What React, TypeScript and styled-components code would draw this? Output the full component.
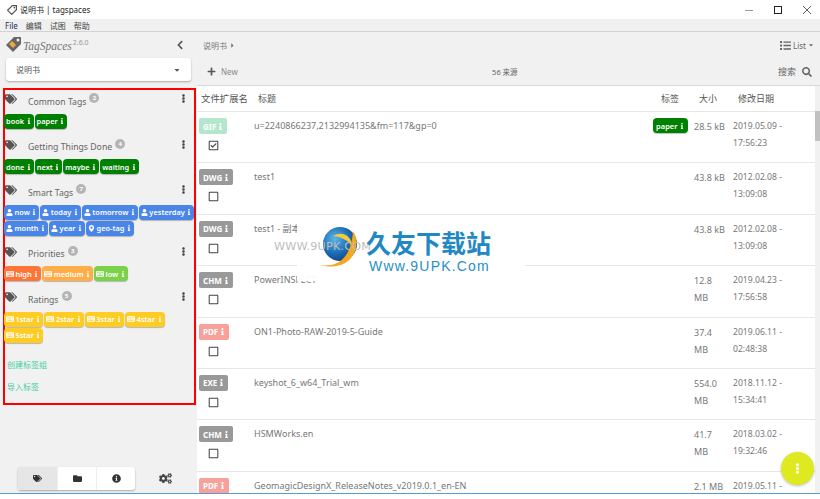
import React from "react"
import styled, { createGlobalStyle } from "styled-components"
import {
  FaTags, FaEllipsisV, FaChevronLeft, FaInfo, FaUser, FaMapMarkerAlt, FaKeyboard,
  FaFolder, FaInfoCircle, FaCogs, FaPlus, FaSearch, FaList, FaCaretDown, FaCaretRight,
  FaRegSquare, FaRegCheckSquare,
} from "react-icons/fa"

const sans = `"Noto Sans", "Noto Sans CJK SC", sans-serif`

const GlobalStyle = createGlobalStyle`
  html, body { margin: 0; padding: 0; background: #fff; }
  body { font-family: ${sans}; overflow: hidden; }
  * { box-sizing: border-box; }
`

const Page = styled.div`
  position: relative;
  width: 820px;
  height: 499px;
  overflow: hidden;
  display: flex;
  flex-direction: column;
  background: #fff;
`

const TitleBar = styled.div`
  height: 19px;
  flex: none;
  display: flex;
  align-items: center;
  padding-left: 7px;
  gap: 3px;
  font-size: 8px;
  color: #222;
  background: #fff;
`

const WindowButtons = styled.div`
  margin-left: auto;
  margin-right: -1px;
  display: flex;
  align-items: center;
`

const WindowButton = styled.div`
  width: 29px;
  height: 19px;
  display: flex;
  align-items: center;
  justify-content: center;
`

const MenuBar = styled.div`
  height: 13px;
  flex: none;
  display: flex;
  align-items: center;
  gap: 8px;
  padding-left: 5px;
  font-size: 8px;
  color: #333;
  background: #f0f0f0;
  border-bottom: 1px solid #d2d2d2;
`

const MenuItem = styled.span<{ $strong?: boolean }>`
  color: ${p => (p.$strong ? "#1b2a55" : "#444")};
`

const Body = styled.div`
  flex: none;
  height: 462px;
  display: flex;
  border-bottom: 1px solid #5b9bd5;
`

const Sidebar = styled.aside`
  width: 197px;
  flex: none;
  display: flex;
  flex-direction: column;
  background: #f1f1f1;
`

const LogoRow = styled.div`
  height: 25px;
  display: flex;
  align-items: center;
  padding: 0 9px 0 5px;
  gap: 1px;
  color: #6f6f6f;
`

const LogoText = styled.span`
  font-family: "Liberation Serif", serif;
  font-style: italic;
  font-size: 11.5px;
  color: #777;
`

const LogoVersion = styled.sup`
  font-size: 7px;
  color: #999;
  margin-left: 1px;
  font-family: ${sans};
  font-style: normal;
`

const CollapseButton = styled.div`
  margin-left: auto;
  margin-right: 3px;
  display: flex;
  color: #555;
  font-size: 10px;
`

const LocationSelect = styled.div`
  margin: 1px 6px 0 6px;
  height: 23px;
  padding: 0 10px;
  display: flex;
  align-items: center;
  justify-content: space-between;
  background: #fff;
  border-radius: 3px;
  box-shadow: 0 1px 2px rgba(0, 0, 0, 0.3);
  font-size: 8px;
  color: #555;
`

const TagPanel = styled.div`
  margin: 7px 1px 0 3px;
  height: 317px;
  flex: none;
  border: 2px solid #f00;
  display: flex;
  flex-direction: column;
`

const GroupHeader = styled.div`
  height: 23.5px;
  display: flex;
  align-items: flex-start;
  padding: 3px 6px 0 0;
  color: #555;
`

const GroupName = styled.span`
  margin: 2.5px 0 0 11px;
  font-size: 8.7px;
  color: #666;
  line-height: 13px;
`

const CountBadge = styled.span`
  margin: 0 0 0 3px;
  width: 10px;
  height: 10px;
  border-radius: 50%;
  background: #b5b5b5;
  color: #fff;
  font-size: 6px;
  font-weight: 700;
  display: flex;
  align-items: center;
  justify-content: center;
`

const GroupMenu = styled.div`
  margin-left: auto;
  color: #444;
  font-size: 9px;
  display: flex;
  padding-top: 1px;
`

const TagList = styled.div`
  display: flex;
  flex-wrap: wrap;
  gap: 1px;
  margin: 0 -2px 7px -1px;
`

const Tag = styled.span<{ $color: string }>`
  height: 15px;
  padding: 0 2px;
  display: inline-flex;
  align-items: center;
  gap: 1.5px;
  border-radius: 4px;
  background: ${p => p.$color};
  color: #fff;
  font-size: 7.4px;
  font-weight: 600;
  white-space: nowrap;
  box-shadow: 0 1px 1px rgba(0, 0, 0, 0.25);
  svg { flex: none; }
`

const SideLink = styled.div`
  font-size: 8px;
  color: #3fcf9f;
  margin: 0 0 0 2px;
  height: 22px;
  line-height: 22px;
`

const SideLinks = styled.div`
  margin-top: 4px;
`

const BottomTabs = styled.div`
  margin-top: auto;
  height: 26px;
  padding: 0 0 3px 18px;
  display: flex;
  align-items: center;
`

const TabGroup = styled.div`
  display: flex;
  height: 23px;
  border-radius: 3px;
  background: #fff;
  box-shadow: 0 1px 2px rgba(0, 0, 0, 0.3);
`

const Tab = styled.div<{ $active?: boolean }>`
  width: 39px;
  display: flex;
  align-items: center;
  justify-content: center;
  font-size: 9px;
  color: #333;
  background: ${p => (p.$active ? "#e6e6e6" : "transparent")};
  border-left: ${p => (p.$active ? "none" : "1px solid #eee")};
`

const SettingsButton = styled.div`
  margin-left: 24px;
  display: flex;
  color: #444;
  font-size: 13px;
`

const Main = styled.main`
  flex: 1;
  min-width: 0;
  display: flex;
  flex-direction: column;
`

const Toolbar = styled.div`
  height: 54px;
  flex: none;
  background: #f1f1f1;
  border-bottom: 1px solid #d8d8d8;
  padding: 0 6px;
  display: flex;
  flex-direction: column;
`

const ToolRow = styled.div`
  height: 26.5px;
  display: flex;
  align-items: center;
  justify-content: space-between;
  font-size: 8px;
  color: #777;
`

const Crumb = styled.span`
  display: flex;
  align-items: center;
  gap: 2px;
`

const ListToggle = styled.span`
  display: flex;
  align-items: center;
  gap: 2px;
  color: #666;
`

const NewButton = styled.span`
  display: flex;
  align-items: center;
  gap: 5px;
  margin-left: 4px;
  font-size: 8px;
  color: #888;
  svg { color: #555; }
`

const FileCount = styled.span`
  font-size: 7.5px;
  color: #666;
  margin-right: 6px;
`

const SearchBox = styled.span`
  display: flex;
  align-items: center;
  gap: 6px;
  font-size: 9px;
  color: #666;
  margin-right: 2px;
`

const TableArea = styled.div`
  position: relative;
  flex: 1;
  min-height: 0;
  overflow: hidden;
  display: flex;
`

const Table = styled.div`
  flex: 1;
  min-width: 0;
  overflow: hidden;
`

const HeaderRow = styled.div`
  display: grid;
  grid-template-columns: 57px 393px 48px 39px 1fr;
  height: 26px;
  align-items: center;
  padding: 0 0 1px 4px;
  border-bottom: 1px solid #e6e6e6;
  font-size: 9px;
  color: #555;
`

const HeaderType = styled.span`
  font-size: 9.4px;
  white-space: nowrap;
`

const HeaderTags = styled.span`
  padding-left: 10px;
`

const FileRow = styled.div`
  display: grid;
  grid-template-columns: 55px 393px 47px 39px 1fr;
  height: 51.4px;
  padding: 6px 0 0 2px;
  border-bottom: 1px solid #e6e6e6;
  font-size: 9px;
  color: #777;
`

const TypeCell = styled.div`
  display: flex;
  flex-direction: column;
  align-items: flex-start;
  gap: 6px;
`

const TypeBadge = styled.span<{ $color: string }>`
  height: 16px;
  padding: 0 3px 0 4px;
  display: inline-flex;
  align-items: center;
  gap: 1px;
  border-radius: 2px;
  background: ${p => p.$color};
  color: #fff;
  font-size: 8px;
  font-weight: 700;
`

const CheckBox = styled.span`
  margin-left: 9px;
  display: flex;
  color: #444;
  font-size: 11px;
`

const FileName = styled.div`
  line-height: 12px;
  padding-top: 2px;
  white-space: nowrap;
`

const TagCell = styled.div`
  display: flex;
  justify-content: flex-end;
  padding-right: 6px;
  align-items: flex-start;
`

const FileTag = styled(Tag)`
  font-size: 7.5px;
  padding: 0 3px;
`

const SizeCell = styled.div`
  line-height: 17px;
  max-width: 34px;
`

const DateCell = styled.div`
  line-height: 17px;
  font-size: 8.6px;
  white-space: nowrap;
`

const ScrollTrack = styled.div`
  width: 5px;
  flex: none;
  background: #f1f1f1;
  padding-top: 25px;
`

const ScrollThumb = styled.div`
  height: 30px;
  background: #c1c1c1;
`

const Fab = styled.div`
  position: absolute;
  right: 6px;
  bottom: 8px;
  width: 33px;
  height: 33px;
  border-radius: 50%;
  background: #dfe91f;
  color: #fff;
  display: flex;
  align-items: center;
  justify-content: center;
  font-size: 11px;
  box-shadow: 0 1px 3px rgba(0, 0, 0, 0.25);
`

const Watermark = styled.div`
  position: absolute;
  left: 297px;
  top: 215px;
  width: 228px;
  height: 66px;
  background: rgba(255, 255, 255, 0.94);
  display: flex;
  align-items: center;
  gap: 5px;
  padding-left: 22px;
`

const WatermarkGhost = styled.div`
  position: absolute;
  left: -23px;
  top: 25px;
  font-size: 11.2px;
  letter-spacing: 0.2px;
  color: #bdbdbd;
  font-family: "DejaVu Sans", sans-serif;
  white-space: nowrap;
`

const WatermarkText = styled.div`
  position: relative;
  display: flex;
  flex-direction: column;
  align-items: flex-start;
  padding-top: 6px;
  line-height: 1;
`

const WatermarkTitle = styled.div`
  font-size: 25px;
  font-weight: 700;
  color: #2288c4;
  font-family: "Noto Sans CJK SC", sans-serif;
  line-height: 26px;
`

const WatermarkUrl = styled.div`
  font-size: 14px;
  letter-spacing: 1.2px;
  color: #2a8fc5;
  font-family: "Liberation Sans", sans-serif;
  margin: 4px 0 0 3px;
`

const GlobeLogo = () => (
  <svg width="42" height="46" viewBox="0 0 42 46" style={{ position: "relative", flex: "none" }}>
    <defs>
      <radialGradient id="globe" cx="35%" cy="35%" r="75%">
        <stop offset="0%" stopColor="#5fb6e8" />
        <stop offset="55%" stopColor="#1b6fb5" />
        <stop offset="100%" stopColor="#123a78" />
      </radialGradient>
    </defs>
    <circle cx="21" cy="19" r="17" fill="url(#globe)" />
    <path d="M14 11 C24 5 34 12 33 23 C32 17 24 12 14 11 Z" fill="#f6c93c" />
    <path d="M1 40 C14 42 32 38 34 6 C44 22 32 48 1 40 Z" fill="#f3a81f" />
  </svg>
)

const TagLogo = () => (
  <svg width="17" height="17" viewBox="0 0 17 17">
    <path d="M9 1 L16 1 L16 8 L8 16 L1 9 Z" fill="#666" />
    <path d="M7 5 L11 9 L8 12 L4 8 Z" fill="#f0a83c" />
    <circle cx="13" cy="4" r="1.5" fill="#f1f1f1" />
  </svg>
)

const AppIcon = () => (
  <svg width="10" height="10" viewBox="0 0 17 17">
    <path d="M9 1 L16 1 L16 8 L8 16 L1 9 Z" fill="none" stroke="#555" strokeWidth="2" />
    <circle cx="12.5" cy="4.5" r="1.4" fill="#555" />
  </svg>
)

type TagDef = { name: string; icon?: "user" | "pin" | "key" }
type GroupDef = { name: string; count: number; color?: string; tags: TagDef[] }

const names = (list: string[], icon?: TagDef["icon"]): TagDef[] => list.map(name => ({ name, icon }))

const groups: GroupDef[] = [
  { name: "Common Tags", count: 2, color: "#008000", tags: names(["book", "paper"]) },
  { name: "Getting Things Done", count: 4, color: "#008000", tags: names(["done", "next", "maybe", "waiting"]) },
  {
    name: "Smart Tags", count: 7, color: "#4a86e8",
    tags: [...names(["now", "today", "tomorrow", "yesterday", "month", "year"], "user"), { name: "geo-tag", icon: "pin" }],
  },
  { name: "Priorities", count: 3, tags: names(["high", "medium", "low"], "key") },
  { name: "Ratings", count: 5, color: "#ffcc24", tags: names(["1star", "2star", "3star", "4star", "5star"], "key") },
]

const priorityColors: Record<string, string> = { high: "#ff7537", medium: "#ffad46", low: "#7bd148" }

const files = [
  { type: "GIF", color: "#b3e6cc", name: "u=2240866237,2132994135&fm=117&gp=0", size: "28.5 kB", date: "2019.05.09 -", time: "17:56:23", checked: true, tag: "paper" },
  { type: "DWG", color: "#999", name: "test1", size: "43.8 kB", date: "2012.02.08 -", time: "13:09:08" },
  { type: "DWG", color: "#999", name: "test1 - 副本", size: "43.8 kB", date: "2012.02.08 -", time: "13:09:08" },
  { type: "CHM", color: "#999", name: "PowerINSPECT", size: "12.8 MB", date: "2019.04.23 -", time: "17:56:58" },
  { type: "PDF", color: "#f8a19a", name: "ON1-Photo-RAW-2019-5-Guide", size: "37.4 MB", date: "2019.06.11 -", time: "02:48:38" },
  { type: "EXE", color: "#999", name: "keyshot_6_w64_Trial_wm", size: "554.0 MB", date: "2018.11.12 -", time: "15:34:41" },
  { type: "CHM", color: "#999", name: "HSMWorks.en", size: "41.7 MB", date: "2018.03.02 -", time: "19:32:46" },
  { type: "PDF", color: "#f8a19a", name: "GeomagicDesignX_ReleaseNotes_v2019.0.1_en-EN", size: "2.1 MB", date: "2019.05.11 -", time: "" },
]

const TagIcon = ({ icon }: { icon?: TagDef["icon"] }) => {
  if (icon === "user") return <FaUser size={7} />
  if (icon === "pin") return <FaMapMarkerAlt size={7} />
  if (icon === "key") return <FaKeyboard size={8} />
  return null
}

export default function App() {
  return (
    <Page>
      <GlobalStyle />
      <TitleBar>
        <AppIcon />
        <span>说明书 | tagspaces</span>
        <WindowButtons>
          <WindowButton>
            <svg width="8" height="8" viewBox="0 0 8 8"><path d="M0 4.5H8" stroke="#999" /></svg>
          </WindowButton>
          <WindowButton>
            <svg width="8" height="8" viewBox="0 0 8 8"><rect x="0.5" y="0.5" width="7" height="7" fill="none" stroke="#222" /></svg>
          </WindowButton>
          <WindowButton>
            <svg width="8" height="8" viewBox="0 0 8 8"><path d="M0 0L8 8M8 0L0 8" stroke="#333" strokeWidth="0.8" /></svg>
          </WindowButton>
        </WindowButtons>
      </TitleBar>
      <MenuBar>
        <MenuItem $strong>File</MenuItem>
        <MenuItem>编辑</MenuItem>
        <MenuItem>试图</MenuItem>
        <MenuItem>帮助</MenuItem>
      </MenuBar>
      <Body>
        <Sidebar>
          <LogoRow>
            <TagLogo />
            <LogoText>TagSpaces<LogoVersion>2.6.0</LogoVersion></LogoText>
            <CollapseButton><FaChevronLeft /></CollapseButton>
          </LogoRow>
          <LocationSelect>
            <span>说明书</span>
            <FaCaretDown size={8} />
          </LocationSelect>
          <TagPanel>
            {groups.map(group => (
              <div key={group.name}>
                <GroupHeader>
                  <FaTags size={12} />
                  <GroupName>{group.name}</GroupName>
                  <CountBadge>{group.count}</CountBadge>
                  <GroupMenu><FaEllipsisV /></GroupMenu>
                </GroupHeader>
                <TagList>
                  {group.tags.map(tag => (
                    <Tag key={tag.name} $color={group.color ?? priorityColors[tag.name]}>
                      <TagIcon icon={tag.icon} />
                      {tag.name}
                      <FaInfo size={6} />
                    </Tag>
                  ))}
                </TagList>
              </div>
            ))}
            <SideLinks>
              <SideLink>创建标签组</SideLink>
              <SideLink>导入标签</SideLink>
            </SideLinks>
          </TagPanel>
          <BottomTabs>
            <TabGroup>
              <Tab $active><FaTags /></Tab>
              <Tab><FaFolder /></Tab>
              <Tab><FaInfoCircle /></Tab>
            </TabGroup>
            <SettingsButton><FaCogs /></SettingsButton>
          </BottomTabs>
        </Sidebar>
        <Main>
          <Toolbar>
            <ToolRow>
              <Crumb>说明书 <FaCaretRight size={7} /></Crumb>
              <ListToggle><FaList size={11} /> List<FaCaretDown size={6} /></ListToggle>
            </ToolRow>
            <ToolRow>
              <NewButton><FaPlus size={9} /> New</NewButton>
              <FileCount>56 来源</FileCount>
              <SearchBox>搜索 <FaSearch size={10} /></SearchBox>
            </ToolRow>
          </Toolbar>
          <TableArea>
            <Table>
              <HeaderRow>
                <HeaderType>文件扩展名</HeaderType>
                <span>标题</span>
                <HeaderTags>标签</HeaderTags>
                <span>大小</span>
                <span>修改日期</span>
              </HeaderRow>
              {files.map(file => (
                <FileRow key={file.name}>
                  <TypeCell>
                    <TypeBadge $color={file.color}>{file.type}<FaInfo size={7} /></TypeBadge>
                    <CheckBox>{file.checked ? <FaRegCheckSquare /> : <FaRegSquare />}</CheckBox>
                  </TypeCell>
                  <FileName>{file.name}</FileName>
                  <TagCell>
                    {file.tag && <FileTag $color="#008000">{file.tag}<FaInfo size={6} /></FileTag>}
                  </TagCell>
                  <SizeCell>{file.size}</SizeCell>
                  <DateCell>{file.date}<br />{file.time}</DateCell>
                </FileRow>
              ))}
            </Table>
            <ScrollTrack><ScrollThumb /></ScrollTrack>
            <Fab><FaEllipsisV /></Fab>
          </TableArea>
        </Main>
      </Body>
      <Watermark>
        <GlobeLogo />
        <WatermarkGhost>WWW.9UPK.COM</WatermarkGhost>
        <WatermarkText>
          <WatermarkTitle>久友下载站</WatermarkTitle>
          <WatermarkUrl>Www.9UPK.Com</WatermarkUrl>
        </WatermarkText>
      </Watermark>
    </Page>
  )
}
